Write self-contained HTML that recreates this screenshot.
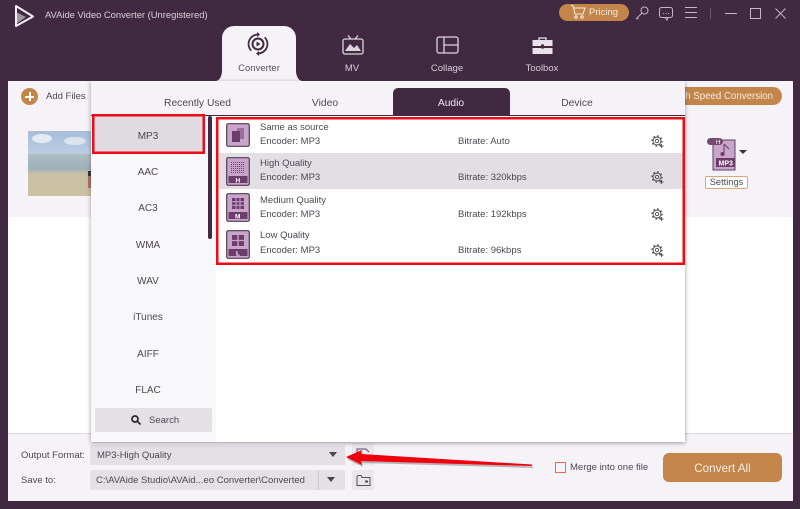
<!DOCTYPE html>
<html><head><meta charset="utf-8"><style>
html,body{margin:0;padding:0}
body{width:800px;height:509px;background:#412a41;overflow:hidden;position:relative;font-family:"Liberation Sans","DejaVu Sans",sans-serif;color:#5a5360}
.a{position:absolute}
.t{position:absolute;white-space:nowrap;font-family:"Liberation Sans","DejaVu Sans",sans-serif;font-size:9.500px;line-height:12px;color:#4e4754;margin-top:1px}
.c{text-align:center}
.l{font-size:10px}
.g{font-size:10.300px}
svg{position:absolute;overflow:visible}
</style></head><body>
<svg style="left:14px;top:4px" width="22" height="24" viewBox="0 0 22 24" fill="none"><path d="M2 2 L19 12.500 L2 22 Z" stroke="#f3eff5" stroke-width="2" stroke-linejoin="round"/><path d="M2 8 L12 13 L2 20 Z" fill="#f3eff5" opacity=".55"/></svg>
<div class="t" style="left:45px;top:8px;color:#d8d0da;font-size:9.400px">AVAide Video Converter (Unregistered)</div>

<div class="a" style="left:559px;top:4px;width:70px;height:17px;border-radius:9px;background:#c4854b"></div>
<svg style="left:570px;top:5px" width="16" height="14" viewBox="0 0 16 14" fill="none" stroke="#f5eadf" stroke-width="1.100"><path d="M1 0.500H3L5 9H13L15 3H4"/><circle cx="6" cy="12" r="1.200"/><circle cx="12" cy="12" r="1.200"/></svg>
<div class="t" style="left:589px;top:6px;color:#f5eadf">Pricing</div>
<svg style="left:635px;top:6px" width="14" height="14" viewBox="0 0 14 14" fill="none" stroke="#c2b6c4"><circle cx="9.500" cy="4.500" r="3.500"/><path d="M7 7 L1.500 12.500 L3.500 13"/></svg>
<svg style="left:659px;top:7px" width="15" height="14" viewBox="0 0 15 14" fill="none" stroke="#c2b6c4"><rect x=".5" y=".5" width="13" height="10" rx="2"/><path d="M4 6.500h1M6.500 6.500h1M9 6.500h1"/><path d="M6 10.500 L8 13 L9 10.500"/></svg>
<svg style="left:685px;top:7px" width="13" height="12" viewBox="0 0 13 12" stroke="#c2b6c4"><path d="M0 .5H12M0 5.500H12M0 10.500H12"/></svg>
<div class="a" style="left:710px;top:8px;width:1px;height:11px;background:#6a556c"></div>
<div class="a" style="left:725px;top:13px;width:12px;height:1px;background:#c2b6c4"></div>
<div class="a" style="left:750px;top:8px;width:9px;height:9px;border:1px solid #c2b6c4"></div>
<svg style="left:775px;top:8px" width="12" height="11" viewBox="0 0 12 11" stroke="#c2b6c4"><path d="M.5 .5L10.500 10.500M10.500 .5L.5 10.500"/></svg>

<div class="a" style="left:222px;top:26px;width:74px;height:56px;background:#f5f3f7;border-radius:12px 12px 0 0"></div>
<svg style="left:216px;top:72px" width="86" height="10" viewBox="0 0 86 10" fill="#f5f3f7"><path d="M6 0V9H0Q5 8 6 0Z"/><path d="M80 0V9H86Q81 8 80 0Z"/></svg>
<svg style="left:247px;top:33px" width="22" height="22" viewBox="0 0 22 22" fill="none" stroke="#412a41" stroke-width="1.700"><path d="M4.300 17.700A9.500 9.500 0 0 1 11 1.500"/><path d="M17.700 4.300A9.500 9.500 0 0 1 11 20.500"/><path d="M10 -1L13 1.500L10 4Z" fill="#412a41" stroke="none"/><path d="M12 18L9 20.500L12 23Z" fill="#412a41" stroke="none"/><circle cx="11" cy="11" r="5.500" stroke-width="2"/><path d="M9.500 8.500L13.500 11L9.500 13.500Z" fill="#412a41" stroke="none"/></svg>
<div class="t c" style="left:222px;top:62px;width:74px;color:#5b4a5e">Converter</div>
<svg style="left:342px;top:35px" width="22" height="20" viewBox="0 0 22 20" fill="none" stroke="#dcd5de" stroke-width="1.300"><rect x="1" y="4" width="20" height="15" rx="2"/><path d="M6 .5L9 4M16 .5L13 4"/><path d="M3 16L8 9L12 13L15 10L19 16Z" fill="#dcd5de" stroke="none"/></svg>
<div class="t c" style="left:322px;top:62px;width:60px;color:#d5ccd7">MV</div>
<svg style="left:436px;top:36px" width="23" height="18" viewBox="0 0 23 18" fill="none" stroke="#dcd5de" stroke-width="1.300"><rect x="1" y="1" width="21" height="16" rx="2"/><path d="M8 1V17M8 9H22"/></svg>
<div class="t c" style="left:417px;top:62px;width:60px;color:#d5ccd7">Collage</div>
<svg style="left:532px;top:37px" width="21" height="18" viewBox="0 0 21 18"><path d="M7 3V1H14V3" fill="none" stroke="#e8e2ea" stroke-width="1.300"/><rect x="0.500" y="3" width="20" height="6" fill="#e8e2ea"/><rect x="0.500" y="11" width="20" height="6" fill="#e8e2ea"/><rect x="9" y="7.500" width="3" height="4" fill="#412a41"/></svg>
<div class="t c" style="left:512px;top:62px;width:60px;color:#d5ccd7">Toolbox</div>

<div class="a" style="left:8px;top:81px;width:785px;height:420px;background:#f5f3f7"></div>
<div class="a" style="left:8px;top:217px;width:785px;height:217px;background:#fff"></div>
<div class="a" style="left:8px;top:433px;width:785px;height:1px;background:#dcd9de"></div>

<div class="a" style="left:21px;top:88px;width:17px;height:17px;border-radius:50%;background:#c4854b"></div>
<div class="a" style="left:25px;top:96px;width:9px;height:1.500px;background:#fff"></div>
<div class="a" style="left:29px;top:92px;width:1.500px;height:9px;background:#fff"></div>
<div class="t" style="left:46px;top:90px">Add Files</div>

<div class="a" style="left:28px;top:131px;width:64px;height:65px;overflow:hidden;background:linear-gradient(180deg,#a6bddb 0,#bccde2 34%,#aebcc4 37%,#9db0b8 58%,#c9c0a6 66%,#cbc0a0 100%)">
<div class="a" style="left:4px;top:3px;width:20px;height:9px;border-radius:50%;background:#e4eaf2"></div>
<div class="a" style="left:36px;top:6px;width:22px;height:8px;border-radius:50%;background:#dbe3ee"></div>
<div class="a" style="left:60px;top:40px;width:4px;height:5px;background:#3a3030"></div>
<div class="a" style="left:60px;top:45px;width:4px;height:12px;background:#b5705c"></div>
</div>

<div class="a" style="left:660px;top:87px;width:122px;height:18px;border-radius:9px;background:#c4854b"></div>
<div class="t" style="right:27px;top:90px;color:#f5eadf;font-size:9.700px">High Speed Conversion</div>

<svg style="left:706px;top:137px" width="42" height="34" viewBox="0 0 42 34"><path d="M7 3H29V33H7Z" fill="#c9a5cb" stroke="#5a4560" stroke-width="1"/><rect x="1" y="1" width="16" height="7" rx="3.500" fill="#74486f"/><text x="10" y="7" font-size="6" fill="#fff" font-family="Liberation Sans">H</text><rect x="10" y="21" width="19" height="9" fill="#6c3d6c"/><text x="12.500" y="28.500" font-size="7" font-weight="bold" fill="#fff" font-family="Liberation Sans">MP3</text><path d="M18 7V17M18 7L23 12" stroke="#6c3d6c" fill="none"/><circle cx="16.500" cy="17" r="2" fill="#6c3d6c"/><path d="M33 13H41L37 17Z" fill="#412a41"/></svg>
<div class="a c" style="left:705px;top:176px;width:41px;height:11px;border:1px solid #d9a778;border-radius:2px;background:#fff;font-size:9.300px;line-height:11px;color:#4e4754">Settings</div>

<div class="t" style="left:21px;top:449px">Output Format:</div>
<div class="a" style="left:90px;top:445px;width:255px;height:20px;background:#e4e0e6;border-radius:2px"></div>
<div class="t" style="left:97px;top:449px">MP3-High Quality</div>
<div class="a" style="left:329px;top:452px;width:0;height:0;border-left:4px solid transparent;border-right:4px solid transparent;border-top:5px solid #4a4450"></div>
<div class="a" style="left:352px;top:443px;width:22px;height:22px;background:#e9e6eb;border-radius:2px"></div>
<div class="t" style="left:21px;top:474px">Save to:</div>
<div class="a" style="left:90px;top:470px;width:255px;height:20px;background:#e4e0e6;border-radius:2px"></div>
<div class="a" style="left:318px;top:470px;width:1px;height:20px;background:#cfcad2"></div>
<div class="t" style="left:96px;top:474px">C:\AVAide Studio\AVAid...eo Converter\Converted</div>
<div class="a" style="left:327px;top:477px;width:0;height:0;border-left:4px solid transparent;border-right:4px solid transparent;border-top:5px solid #4a4450"></div>
<div class="a" style="left:352px;top:470px;width:22px;height:20px;background:#e9e6eb;border-radius:2px"></div>
<svg style="left:356px;top:474px" width="15" height="13" viewBox="0 0 15 13" fill="none" stroke="#5b4a5e"><path d="M1 2.500V11.500H14V3.500H6L5 1.500H2Z"/><rect x="9" y="6.500" width="3" height="2" fill="#5b4a5e" stroke="none"/></svg>
<svg style="left:356px;top:447px" width="15" height="12" viewBox="0 0 15 12" fill="none" stroke="#5b4a5e"><path d="M1 10V2H10L13 5"/></svg>

<div class="a" style="left:555px;top:462px;width:9px;height:9px;border:1.500px solid #f0683c"></div>
<div class="t" style="left:570px;top:461px">Merge into one file</div>
<div class="a c" style="left:663px;top:453px;width:119px;height:29px;border-radius:6px;background:#c4854b;color:#f7eee4;font-size:11.700px;line-height:31px">Convert All</div>

<div class="a" style="left:91px;top:81px;width:594px;height:361px;background:#fff;box-shadow:0 1px 4px rgba(60,50,60,.5)"></div>
<div class="a" style="left:91px;top:81px;width:594px;height:34px;background:#f5f3f7"></div>
<div class="a" style="left:91px;top:115px;width:594px;height:1px;background:#412a41"></div>
<div class="a" style="left:393px;top:88px;width:117px;height:27px;background:#412a41;border-radius:5px 5px 0 0"></div>
<div class="t c g" style="left:140px;top:97px;width:115px">Recently Used</div>
<div class="t c g" style="left:285px;top:97px;width:80px">Video</div>
<div class="t c g" style="left:411px;top:97px;width:80px;color:#ece6ee">Audio</div>
<div class="t c g" style="left:537px;top:97px;width:80px">Device</div>

<div class="a" style="left:91px;top:116px;width:125px;height:326px;background:#f8f7f9"></div>
<div class="a" style="left:92px;top:116px;width:112px;height:38px;background:#dfdbe0"></div>
<div class="a" style="left:208px;top:116px;width:4px;height:123px;background:#412a41;border-radius:2px"></div>
<div class="t c l" style="left:92px;top:130px;width:112px">MP3</div>
<div class="t c l" style="left:92px;top:166px;width:112px">AAC</div>
<div class="t c l" style="left:92px;top:202px;width:112px">AC3</div>
<div class="t c l" style="left:92px;top:239px;width:112px">WMA</div>
<div class="t c l" style="left:92px;top:275px;width:112px">WAV</div>
<div class="t c l" style="left:92px;top:311px;width:112px">iTunes</div>
<div class="t c l" style="left:92px;top:348px;width:112px">AIFF</div>
<div class="t c l" style="left:92px;top:384px;width:112px">FLAC</div>
<div class="a" style="left:95px;top:408px;width:117px;height:24px;background:#e4e0e6;border-radius:2px"></div>
<svg style="left:131px;top:415px" width="10" height="10" viewBox="0 0 10 10" fill="none" stroke="#2b2630" stroke-width="1.700"><circle cx="4" cy="4" r="3"/><path d="M6.500 6.500L9.500 9.500"/></svg>
<div class="t" style="left:149px;top:414px">Search</div>

<div class="a" style="left:219px;top:153px;width:465px;height:36px;background:#e2dee4"></div>

<svg style="left:226px;top:123px" width="24" height="24" viewBox="0 0 24 24"><rect x=".7" y=".7" width="22.600" height="22.600" rx="1.500" fill="#c9a5cb" stroke="#4f3d52" stroke-width="1.200"/><rect x="11" y="5" width="7" height="11" fill="#9c6f9f"/><rect x="6" y="8" width="8" height="11" fill="#6c3d6c"/></svg>
<svg style="left:226px;top:157px" width="24" height="29" viewBox="0 0 24 29"><rect x=".7" y=".7" width="22.600" height="27.600" rx="1.500" fill="#c9a5cb" stroke="#4f3d52" stroke-width="1.200"/><path d="M5 5.500H19M5 7.500H19M5 9.500H19M5 11.500H19M5 13.500H19M5 15.500H19" stroke="#6c3d6c" stroke-width="1" stroke-dasharray="1 1"/><rect x="2.500" y="19" width="19" height="7" fill="#6c3d6c"/><text x="9.500" y="25.300" font-size="6.500" font-weight="bold" fill="#fff" font-family="Liberation Sans">H</text></svg>
<svg style="left:226px;top:193px" width="24" height="29" viewBox="0 0 24 29"><rect x=".7" y=".7" width="22.600" height="27.600" rx="1.500" fill="#c9a5cb" stroke="#4f3d52" stroke-width="1.200"/><rect x="6" y="5" width="12" height="11" fill="#6c3d6c"/><path d="M10 5V16M14 5V16M6 8.700H18M6 12.300H18" stroke="#c9a5cb"/><rect x="2.500" y="19" width="19" height="7" fill="#6c3d6c"/><text x="9" y="25.300" font-size="6.500" font-weight="bold" fill="#fff" font-family="Liberation Sans">M</text></svg>
<svg style="left:226px;top:230px" width="24" height="29" viewBox="0 0 24 29"><rect x=".7" y=".7" width="22.600" height="27.600" rx="1.500" fill="#c9a5cb" stroke="#4f3d52" stroke-width="1.200"/><rect x="6" y="5" width="12" height="11" fill="#6c3d6c"/><path d="M12 5V16M6 10.500H18" stroke="#c9a5cb" stroke-width="1.300"/><rect x="2.500" y="19" width="19" height="7" fill="#6c3d6c"/><text x="10" y="25.300" font-size="6.500" font-weight="bold" fill="#fff" font-family="Liberation Sans">L</text></svg>

<div class="t" style="left:260px;top:121px">Same as source</div>
<div class="t" style="left:260px;top:135px">Encoder: MP3</div>
<div class="t" style="left:458px;top:135px">Bitrate: Auto</div>
<div class="t" style="left:260px;top:157px">High Quality</div>
<div class="t" style="left:260px;top:171px">Encoder: MP3</div>
<div class="t" style="left:458px;top:171px">Bitrate: 320kbps</div>
<div class="t" style="left:260px;top:194px">Medium Quality</div>
<div class="t" style="left:260px;top:208px">Encoder: MP3</div>
<div class="t" style="left:458px;top:208px">Bitrate: 192kbps</div>
<div class="t" style="left:260px;top:229px">Low Quality</div>
<div class="t" style="left:260px;top:244px">Encoder: MP3</div>
<div class="t" style="left:458px;top:244px">Bitrate: 96kbps</div>

<svg style="left:651px;top:135px" width="13" height="13" viewBox="0 0 13 13" fill="none" stroke="#4a4450"><circle cx="6" cy="6" r="4" stroke-width=".9"/><circle cx="6" cy="6" r="5" stroke-width="1.400" stroke-dasharray="1.500 2.430"/><circle cx="6" cy="6" r="1.700" stroke-width=".9"/><path d="M10.500 9V13M8.500 11H12.500" stroke-width=".9"/></svg>
<svg style="left:651px;top:171px" width="13" height="13" viewBox="0 0 13 13" fill="none" stroke="#4a4450"><circle cx="6" cy="6" r="4" stroke-width=".9"/><circle cx="6" cy="6" r="5" stroke-width="1.400" stroke-dasharray="1.500 2.430"/><circle cx="6" cy="6" r="1.700" stroke-width=".9"/><path d="M10.500 9V13M8.500 11H12.500" stroke-width=".9"/></svg>
<svg style="left:651px;top:208px" width="13" height="13" viewBox="0 0 13 13" fill="none" stroke="#4a4450"><circle cx="6" cy="6" r="4" stroke-width=".9"/><circle cx="6" cy="6" r="5" stroke-width="1.400" stroke-dasharray="1.500 2.430"/><circle cx="6" cy="6" r="1.700" stroke-width=".9"/><path d="M10.500 9V13M8.500 11H12.500" stroke-width=".9"/></svg>
<svg style="left:651px;top:244px" width="13" height="13" viewBox="0 0 13 13" fill="none" stroke="#4a4450"><circle cx="6" cy="6" r="4" stroke-width=".9"/><circle cx="6" cy="6" r="5" stroke-width="1.400" stroke-dasharray="1.500 2.430"/><circle cx="6" cy="6" r="1.700" stroke-width=".9"/><path d="M10.500 9V13M8.500 11H12.500" stroke-width=".9"/></svg>

<svg style="left:0;top:0" width="800" height="509" viewBox="0 0 800 509" fill="none" stroke="#ec0b16" stroke-width="2.500"><rect x="93.250" y="115.250" width="110.500" height="37.500"/><rect x="217.250" y="118.250" width="466.500" height="145.500"/></svg>

<svg style="left:345px;top:448px" width="190" height="24" viewBox="0 0 190 24"><path d="M1 9L17 2L16 6L187 16.500L187 18L16 13L17 17Z" fill="#8a8a8a" opacity=".6" transform="translate(1 2)"/><path d="M1 9L17 2L16 6L187 16.500L187 18L16 13L17 17Z" fill="#f0000f"/></svg>
</body></html>
